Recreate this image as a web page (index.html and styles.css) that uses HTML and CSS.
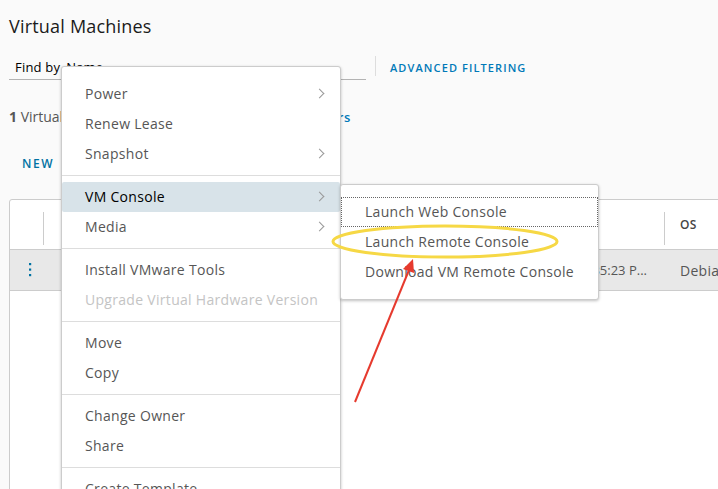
FILE: index.html
```html
<!DOCTYPE html>
<html lang="en">
<head>
    <meta charset="UTF-8">
    <meta name="viewport" content="width=device-width, initial-scale=1.0">
    <title>Virtual Machines</title>
    <link rel="stylesheet" href="styles.css">
</head>
<body>
    <div class="page">
        <h1 class="title">Virtual Machines</h1>

        <div class="filter-bar">
            <div class="find-input">
                <span class="find-label">Find by</span>
                <span class="find-placeholder">Name</span>
            </div>
            <span class="filter-divider"></span>
            <a class="link-btn" href="#">ADVANCED FILTERING</a>
        </div>

        <div class="summary">
            <span><b>1</b> Virtual Machine</span>
            <a class="summary-link" href="#">Show filters</a>
        </div>

        <div class="toolbar">
            <button class="new-btn">NEW</button>
        </div>

        <div class="datagrid">
            <div class="grid-head">
                <div class="cell cell-action"></div>
                <div class="cell cell-name">Name</div>
                <div class="cell cell-date head-date">Created On</div>
                <div class="cell cell-os">OS</div>
            </div>
            <div class="grid-row">
                <div class="cell cell-action">
                    <svg class="kebab" width="4" height="14" viewBox="0 0 4 14">
                        <rect x="1" y="0" width="2.2" height="2.2" />
                        <rect x="1" y="5.5" width="2.2" height="2.2" />
                        <rect x="1" y="11" width="2.2" height="2.2" />
                    </svg>
                </div>
                <div class="cell cell-name">debian-vm-01</div>
                <div class="cell cell-date">9/28/2023, 2:35:23 P...</div>
                <div class="cell cell-os">Debian GNU/Linux 11</div>
            </div>
        </div>
    </div>

    <!-- context menu -->
    <div class="context-menu">
        <div class="menu-item has-sub">Power</div>
        <div class="menu-item">Renew Lease</div>
        <div class="menu-item has-sub">Snapshot</div>
        <div class="menu-sep"></div>
        <div class="menu-item has-sub active">VM Console</div>
        <div class="menu-item has-sub">Media</div>
        <div class="menu-sep"></div>
        <div class="menu-item">Install VMware Tools</div>
        <div class="menu-item disabled">Upgrade Virtual Hardware Version</div>
        <div class="menu-sep"></div>
        <div class="menu-item">Move</div>
        <div class="menu-item">Copy</div>
        <div class="menu-sep"></div>
        <div class="menu-item">Change Owner</div>
        <div class="menu-item">Share</div>
        <div class="menu-sep"></div>
        <div class="menu-item">Create Template</div>
    </div>

    <div class="sub-menu">
        <div class="menu-item focused">Launch Web Console</div>
        <div class="menu-item">Launch Remote Console</div>
        <div class="menu-item">Download VM Remote Console</div>
    </div>

    <!-- annotation drawn on top of the screenshot -->
    <svg class="annotation" width="718" height="489" viewBox="0 0 718 489">
        <ellipse cx="445" cy="241.5" rx="112" ry="15.5" fill="none" stroke="#f6d845" stroke-width="3" />
        <line x1="355" y1="402" x2="409" y2="270" stroke="#e63a2e" stroke-width="2" />
        <polygon points="413,259 414,273 403,269" fill="#e63a2e" />
    </svg>
</body>
</html>
```

FILE: styles.css
```css
* {
    box-sizing: border-box;
    margin: 0;
    padding: 0;
}
html, body {
    overflow: hidden;
}
body {
    font-family: "Open Sans", Arial, sans-serif;
    font-size: 14px;
    color: #565656;
    background-color: #fafafa;
    width: 718px;
    height: 489px;
    position: relative;
}
.page {
    padding: 14px 0 0 9px;
}
.title {
    font-size: 18px;
    font-weight: 400;
    line-height: 24px;
    letter-spacing: 0.2px;
    color: #1b1b1b;
}
.filter-bar {
    display: flex;
    align-items: flex-start;
    margin-top: 18px;
    height: 24px;
}
.find-input {
    width: 357px;
    height: 24px;
    border-bottom: 1px solid #b3b3b3;
    display: flex;
    gap: 6px;
    padding-left: 6px;
    line-height: 23px;
    font-size: 13px;
    letter-spacing: 0.2px;
    color: #000;
}
.filter-divider {
    width: 1px;
    height: 20px;
    background-color: #ddd;
    margin-left: 9px;
}
.link-btn {
    margin-left: 14px;
    line-height: 24px;
    font-size: 11px;
    font-weight: 600;
    letter-spacing: 1.1px;
    color: #0079b8;
    text-decoration: none;
}
.summary {
    margin-top: 27px;
    width: 342px;
    display: flex;
    justify-content: space-between;
    line-height: 20px;
}
.summary-link {
    color: #0079b8;
    font-size: 13px;
    font-weight: 600;
    letter-spacing: 0.6px;
    text-decoration: none;
}
.toolbar {
    margin-top: 18px;
    height: 36px;
}
.new-btn {
    height: 36px;
    padding: 0 13px;
    border: none;
    background: none;
    font-family: inherit;
    font-size: 12px;
    font-weight: 600;
    letter-spacing: 1.6px;
    color: #0072a3;
}
.datagrid {
    margin-top: 18px;
    width: 780px;
    height: 320px;
    border: 1px solid #ccc;
    border-radius: 3px;
    background-color: #fff;
}
.grid-head, .grid-row {
    display: grid;
    grid-template-columns: 34px 426px 194px 1fr;
}
.grid-head {
    height: 50px;
    border-bottom: 1px solid #ccc;
    font-size: 12px;
    font-weight: 600;
    letter-spacing: 0.4px;
    color: #454545;
}
.grid-row {
    height: 41px;
    border-bottom: 1px solid #ccc;
    background-color: #e8e8e8;
    letter-spacing: 0.3px;
}
.cell {
    display: flex;
    align-items: center;
    position: relative;
    white-space: nowrap;
    overflow: hidden;
}
.grid-head .cell-action {
    border-right: 1px solid #ccc;
    margin: 12px 0 4px;
}
.grid-head .cell-os::before {
    content: "";
    position: absolute;
    left: 0;
    top: 12px;
    bottom: 4px;
    border-left: 1px solid #ccc;
}
.cell-os {
    padding-left: 16px;
}
.cell-name {
    padding-left: 28px;
}
.cell-action {
    justify-content: center;
}
.kebab {
    fill: #0072a3;
    margin-left: 6px;
}
.cell-date {
    justify-content: flex-end;
    padding-right: 17px;
}
.grid-row .cell-date {
    font-size: 13px;
    letter-spacing: 0;
}
.grid-head .head-date {
    justify-content: flex-start;
    padding-left: 14px;
}

/* menus */
.context-menu, .sub-menu {
    position: absolute;
    background-color: #fff;
    border: 1px solid #ccc;
    border-radius: 3px;
    box-shadow: 0 1px 3px rgba(0,0,0,0.25);
    padding: 12px 0;
    letter-spacing: 0.3px;
}
.context-menu {
    left: 61px;
    top: 66px;
    width: 280px;
}
.sub-menu {
    left: 340px;
    top: 184px;
    width: 259px;
}
.menu-item {
    height: 30px;
    line-height: 30px;
    padding-left: 23px;
    position: relative;
    white-space: nowrap;
}
.sub-menu .menu-item {
    padding-left: 24px;
}
.menu-item.has-sub::after {
    content: "";
    position: absolute;
    right: 17px;
    top: 11px;
    width: 6px;
    height: 6px;
    border-top: 1px solid #999;
    border-right: 1px solid #999;
    transform: rotate(45deg);
}
.menu-item.active {
    background-color: #d8e3e9;
    color: #000;
    border-radius: 2px;
}
.menu-item.disabled {
    color: #c4c4c4;
}
.menu-item.focused {
    outline: 1px dotted #666;
    outline-offset: -1px;
}
.menu-sep {
    height: 1px;
    background-color: #ddd;
    margin: 6px 0;
}
.annotation {
    position: absolute;
    left: 0;
    top: 0;
    pointer-events: none;
}
```
